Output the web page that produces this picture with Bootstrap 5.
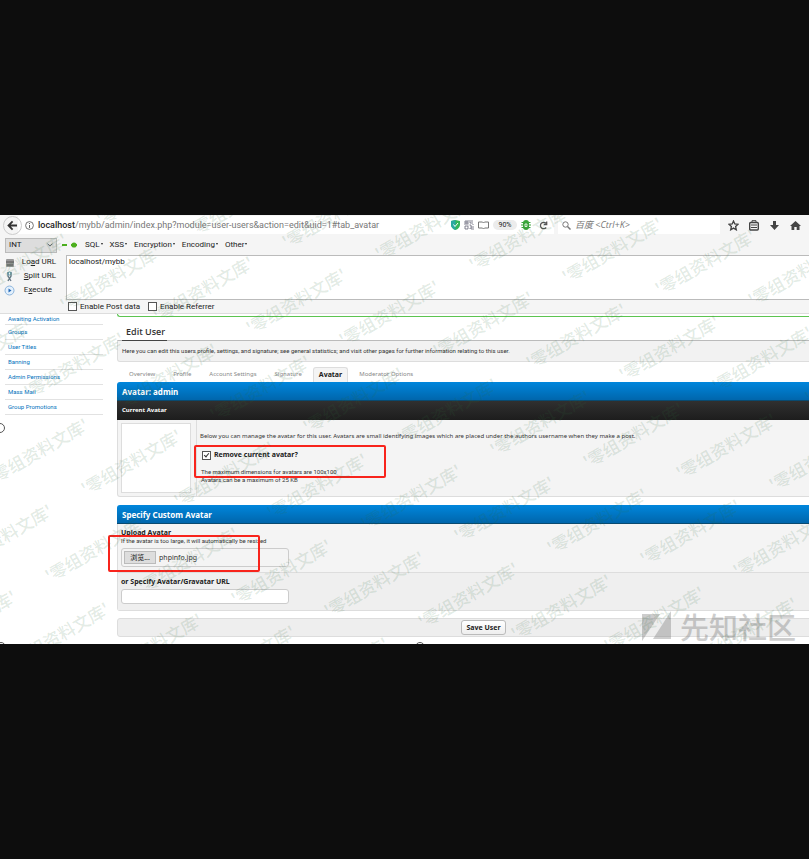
<!DOCTYPE html>
<html lang="en">
<head>
<meta charset="utf-8">
<meta name="viewport" content="width=device-width, initial-scale=1">
<title>Edit User</title>
<link href="https://cdn.jsdelivr.net/npm/bootstrap@5.3.0/dist/css/bootstrap.min.css" rel="stylesheet">
<style>
body{background:#0d0d0d;color:#333;font:6px/8px Roboto,"Noto Sans CJK SC",sans-serif}
.browser{background:#fff}
.chrome{background:#f5f5f5;font-size:8px;line-height:12px;color:#222}
.urlrow{height:20px;padding-left:3px}
.backbtn{width:19px;height:19px;border:1px solid #ccc!important;background:#fafafa;z-index:1}
.urlbox{background:#fff;height:18px;width:536px;margin-left:-4px;padding:0 6px 0 7px;color:#777}
.urltext{font-size:9px;line-height:14px;color:#777}
.urltext b{color:#222;font-weight:500}
.zoomlvl{background:#ececec;border-radius:6px;font-size:7px;line-height:10px;width:24px;color:#222}
.searchbox{background:#fff;height:18px;width:162px;margin-left:4px;padding:0 4px}
.searchbox input{font-size:9px;line-height:12px;font-style:italic;font-family:"Open Sans","Noto Sans CJK SC",sans-serif}
.searchbox input::placeholder{color:#777;opacity:1}
.tools{gap:10px;margin-left:8px}
.hackrow{height:20px;padding-left:5px}
.hackrow .form-select{width:52px;height:15px;font-size:8px;line-height:12px;padding:0 14px 0 3px;background-color:#ddd;border-color:#bbb;border-radius:0;background-size:6px;background-position:right 3px center;color:#222}
.menus{gap:7px;margin-left:8px}
.plain{background:none;border:0;padding:0;color:inherit;font:inherit}
.menus button::after{content:"";display:inline-block;border:solid transparent;border-width:2px 1px 0;border-top-color:#222;margin-left:1px;vertical-align:2px}
.cmds{width:66px;padding-left:4px;padding-right:10px}
.cmds button{height:14px}
.cmds svg{width:11px;height:11px}
.hackarea{height:45px;font-size:8px;line-height:12px;padding:0 2px;border:1px solid #bbb;border-right:0;border-radius:0;resize:none;color:#222}
.checks{height:14px;padding-left:68px;gap:8px;border-bottom:1px solid #ddd}
.checks label{gap:3px}
.tick{appearance:none;width:9px;height:9px;border:1px solid #555;background:#fff;margin:0;flex:none;position:relative}
.tick:checked::after{content:"";position:absolute;left:2px;top:0;width:3px;height:5px;border:solid #333;border-width:0 1px 1px 0;transform:rotate(40deg)}
.side{width:98px;margin-left:5px}
.side a{height:15px;padding:0 3px;color:#0072bc;border-bottom:1px solid #e2e2e2;line-height:8px}
.side a:first-child{height:11px}
.main{margin-left:14px;margin-right:-41px;min-width:0}
.notice{height:3px;border-bottom:1px solid #5cc450;border-left:1px solid #5cc450;border-radius:0 0 0 3px}
.pagetitle{font:600 9px/12px "Open Sans",sans-serif;padding:9px 4px 2px;border-bottom:1px solid #444;width:45px;margin:0 0 0 5px;white-space:nowrap;position:relative;z-index:1}
.intro{background:#f2f2f2;border:1px solid #ddd;border-top-color:#bbb;height:22px;padding:0 4px;margin-top:-1px;border-radius:0 0 0 3px}
.tabs{height:20px;padding-left:5px;gap:4px}
.tabs a{height:15px;padding:0 7px;line-height:15px;color:#888;font-family:"Noto Sans",sans-serif}
.tabs a.on{background:#f4f4f4;border:1px solid #ddd;border-bottom:0;border-radius:3px 3px 0 0;font:bold 7px/13px "Noto Sans",sans-serif;color:#222;padding:0 5px}
.bluebar{background:linear-gradient(#0086dc,#0066ac);border-bottom:1px solid #094a70;color:#fff;font:bold 8px/19px "Noto Sans",sans-serif;height:19px;padding:0 5px;margin:0;border-radius:3px 3px 0 0}
.blackbar{background:linear-gradient(#303030,#1d1d1d);color:#fff;font:bold 6px/19px "Noto Sans",sans-serif;height:19px;padding:0 5px}
.panel{background:#f4f4f4;border:1px solid #ddd;border-top:0;border-radius:0 0 0 3px}
.avatarcell{padding:3px 5px 3px 3px;border-right:1px solid #ddd}
.avatarpic{width:70px;height:70px;background:#fff;border:1px solid #ddd}
.about{padding:12px 3px 0}
.blurb{font:6px/8px "Noto Sans",sans-serif;white-space:nowrap}
.removal{margin:9px 0 7px 2px;height:12px;gap:3px;font:bold 7px/12px "Noto Sans",sans-serif;color:#222}
.limits{padding-left:1px}
.markbox{position:absolute;border:2px solid #f8241c;border-radius:2px;pointer-events:none}
.m1{left:77px;top:131px;width:192px;height:33px}
.m2{left:-9px;top:221px;width:152px;height:37px}
.lbl{font:bold 7px/9px "Noto Sans",sans-serif;color:#222}
.filebox{width:168px;height:19px;border:1px solid #ccc;border-radius:3px;margin-top:3px;padding-left:2px;gap:3px;font-size:7px;font-family:"Noto Sans","Noto Sans CJK SC",sans-serif}
.browse{background:#ddd;border:1px solid #bbb;width:32px;height:13px;line-height:11px;color:#111}
.urlfield{width:168px;height:15px;border:1px solid #ccc;border-radius:3px;background:#fff;font-size:7px;padding:0 3px;margin-top:3px}
.upload{padding:4px 3px 5px;border-bottom:1px solid #ddd}
.gravatar{background:#efefef;padding:4px 3px 6px}
.savebar{background:#eee;border:1px solid #ddd;border-radius:3px;height:19px;margin:7px 0}
.savebtn{width:45px;height:15px;padding:0;border:1px solid #bbb;border-radius:3px;background:linear-gradient(#fff,#eee);font:bold 7px/12px "Noto Sans",sans-serif;color:#222}
.stamps,.logo,.arcs{position:absolute;pointer-events:none}
.stamps,.arcs{inset:0;width:100%;height:100%}
.stamps{fill:#2e6b3c;fill-opacity:.15;font-weight:500}
.logo{right:13px;bottom:1px;height:34px;gap:8px;font-size:29px;line-height:34px;color:#777;opacity:.36;font-family:"Noto Sans CJK SC",sans-serif;font-weight:500}
</style>
<script src="https://cdn.jsdelivr.net/npm/bootstrap@5.3.0/dist/js/bootstrap.bundle.min.js"></script>
</head>
<body class="min-vh-100 d-flex flex-column justify-content-center overflow-hidden">
<div class="browser position-relative overflow-hidden">
<header class="chrome">
  <div class="urlrow d-flex align-items-center">
    <button class="backbtn rounded-circle plain d-flex align-items-center justify-content-center flex-shrink-0" aria-label="Back"><svg width="11" height="11" viewBox="0 0 11 11" fill="none" stroke="#333" stroke-width="1.8"><path d="M10 5.500H1.800M5.600 1.300 1.500 5.500l4.100 4.200"/></svg></button>
    <div class="urlbox d-flex align-items-center flex-shrink-0">
      <svg width="9" height="9" viewBox="0 0 9 9" class="me-1"><circle cx="4.500" cy="4.500" r="3.900" fill="none" stroke="#666" stroke-width=".9"/><path d="M4.500 4v3M4.500 2v1" stroke="#666"/></svg>
      <span class="urltext flex-grow-1"><b>localhost</b>/mybb/admin/index.php?module=user-users&amp;action=edit&amp;uid=1#tab_avatar</span>
      <span class="d-flex align-items-center gap-1">
      <svg width="9" height="10" viewBox="0 0 9 10"><path d="M0 1 4.500 0 9 1v4Q8.500 8.500 4.500 10 .5 8.500 0 5z" fill="#35b558"/><path d="M0 1 4.500 0v10Q.5 8.500 0 5z" fill="#2ba9a0"/><path d="m2.500 4.500 1.500 2L7 3" fill="none" stroke="#fff"/></svg>
      <svg width="10" height="10" viewBox="0 0 10 10" fill="none" stroke="#667" stroke-width=".8"><path d="M1 1h2v2H1zM4 0v4H0M6 0v3h3M7 1h2M1 6h3v3H1zM6 5h1v2h3M6 9V8h2v2M4.500 5h1M9 4v1M9 9h1"/></svg>
      <svg width="11" height="9" viewBox="0 0 11 9" fill="none" stroke="#777"><path d="M.5 1h4l1 1 1-1h4v6h-4l-1 1-1-1h-4z"/></svg>
      <span class="zoomlvl text-center">90%</span>
      <svg width="10" height="10" viewBox="0 0 10 10"><path d="M.5 2.500h9M0 5h10M.5 7.500h9" stroke="#3ba53b"/><rect x="2" y="0" width="6" height="10" rx="3" fill="#3ba53b"/><path d="M4 4h2v2.500H4z" fill="none" stroke="#fff" stroke-width=".8"/></svg>
      <svg width="9" height="9" viewBox="0 0 9 9" class="ms-1" fill="none" stroke="#555" stroke-width="1.300"><path d="M7.200 6.500A3.200 3.200 0 1 1 7 2.300M7.700.5v3H4.800"/></svg></span>
    </div>
    <div class="searchbox d-flex align-items-center gap-1 flex-shrink-0">
      <svg width="9" height="9" viewBox="0 0 9 9" fill="none" stroke="#777" class="flex-shrink-0"><circle cx="3.500" cy="3.500" r="2.700"/><path d="m5.500 5.500 3 3" stroke-width="1.500"/></svg>
      <input class="plain w-100" aria-label="Search" placeholder="百度 &lt;Ctrl+K&gt;">
    </div>
    <div class="tools d-flex align-items-center">
      <svg width="11" height="11" viewBox="0 0 11 11"><path d="m5.500 1 1.300 3 3.200.3-2.400 2.200.7 3.300-2.800-1.700-2.800 1.700.7-3.300L1 4.300 4.200 4z" fill="none" stroke="#444" stroke-width="1.300"/></svg>
      <svg width="10" height="11" viewBox="0 0 10 11"><path d="M3 2V.7h4V2" fill="none" stroke="#444"/><rect x=".7" y="2.500" width="8.600" height="7.500" rx="1" fill="none" stroke="#444" stroke-width="1.400"/><path d="M2 5h6M2 7.500h6" stroke="#444"/></svg>
      <svg width="11" height="11" viewBox="0 0 11 11"><path d="M4 1h3v4h3L5.500 10 1 5h3z" fill="#444"/></svg>
      <svg width="11" height="11" viewBox="0 0 11 11"><path d="M5.500 1 11 6H9.500v4H6.700V7H4.300v3H1.500V6H0z" fill="#444"/></svg>
    </div>
  </div>
  <div class="hackrow d-flex align-items-center">
    <select class="form-select" aria-label="Type"><option>INT</option></select>
    <svg width="16" height="8" viewBox="0 0 16 8" class="ms-1"><path d="M1 4h5M10 4h6" stroke="#4caf1e" stroke-width="2"/><circle cx="13" cy="4" r="2.600" fill="#4caf1e"/></svg>
    <nav class="menus d-flex"><button class="plain">SQL</button><button class="plain">XSS</button><button class="plain">Encryption</button><button class="plain">Encoding</button><button class="plain">Other</button></nav>
  </div>
  <div class="d-flex">
    <div class="cmds d-flex flex-column flex-shrink-0">
      <button class="plain d-flex align-items-center justify-content-between"><svg viewBox="0 0 11 11"><rect x="2" y="2" width="8" height="8" rx="1" fill="#999"/><path d="M2 5h8M3 8h6" stroke="#555"/></svg><span>Lo<u>a</u>d URL</span></button>
      <button class="plain d-flex align-items-center justify-content-between"><svg viewBox="0 0 11 11" fill="none" stroke="#678"><path d="M4 1v4l3 5M7 1v4l-3 5" stroke-width="1.300"/><circle cx="5.500" cy="2.500" r="1.500" stroke="#59a"/></svg><span><u>S</u>plit URL</span></button>
      <button class="plain d-flex align-items-center justify-content-between"><svg viewBox="0 0 11 11"><circle cx="5.500" cy="5.500" r="4.500" fill="#e3f0fc" stroke="#8cb4dc"/><path d="m4.500 3.500 3 2-3 2z" fill="#2469b8"/></svg><span class="pe-1">E<u>x</u>ecute</span></button>
    </div>
    <textarea class="hackarea form-control flex-grow-1" aria-label="URL">localhost/mybb</textarea>
  </div>
  <div class="checks d-flex align-items-center">
    <label class="d-flex align-items-center"><input type="checkbox" class="tick">Enable Post data</label>
    <label class="d-flex align-items-center"><input type="checkbox" class="tick">Enable Referrer</label>
  </div>
</header>
<div class="d-flex align-items-start">
  <nav class="side d-flex flex-column flex-shrink-0">
    <a href="#" class="text-decoration-none d-flex align-items-center">Awaiting Activation</a>
    <a href="#" class="text-decoration-none d-flex align-items-center">Groups</a>
    <a href="#" class="text-decoration-none d-flex align-items-center">User Titles</a>
    <a href="#" class="text-decoration-none d-flex align-items-center">Banning</a>
    <a href="#" class="text-decoration-none d-flex align-items-center">Admin Permissions</a>
    <a href="#" class="text-decoration-none d-flex align-items-center">Mass Mail</a>
    <a href="#" class="text-decoration-none d-flex align-items-center">Group Promotions</a>
  </nav>
  <main class="main flex-grow-1 position-relative">
    <div class="notice"></div>
    <h1 class="pagetitle">Edit User</h1>
    <div class="intro d-flex align-items-center">Here you can edit this users profile, settings, and signature; see general statistics; and visit other pages for further information relating to this user.</div>
    <nav class="tabs d-flex align-items-end">
      <a href="#" class="text-decoration-none">Overview</a><a href="#" class="text-decoration-none">Profile</a><a href="#" class="text-decoration-none">Account Settings</a><a href="#" class="text-decoration-none">Signature</a><a href="#" class="on text-decoration-none">Avatar</a><a href="#" class="text-decoration-none">Moderator Options</a>
    </nav>
    <h2 class="bluebar">Avatar: admin</h2>
    <div class="blackbar">Current Avatar</div>
    <div class="panel d-flex">
      <div class="avatarcell"><div class="avatarpic"></div></div>
      <div class="about">
        <div class="blurb">Below you can manage the avatar for this user. Avatars are small identifying images which are placed under the authors username when they make a post.</div>
        <label class="removal d-flex align-items-center"><input type="checkbox" class="tick" checked>Remove current avatar?</label>
        <div class="limits">The maximum dimensions for avatars are 100x100<br>Avatars can be a maximum of 25 KB</div>
      </div>
    </div>
    <h2 class="bluebar mt-2">Specify Custom Avatar</h2>
    <div class="panel">
      <div class="upload">
        <div class="lbl">Upload Avatar</div>
        <div>If the avatar is too large, it will automatically be resized</div>
        <label class="filebox d-flex align-items-center"><input type="file" class="visually-hidden"><span class="browse text-center">浏览...</span><span>phpinfo.jpg</span></label>
      </div>
      <div class="gravatar">
        <label class="lbl d-block" for="gurl">or Specify Avatar/Gravatar URL</label>
        <input id="gurl" type="text" class="urlfield d-block">
      </div>
    </div>
    <div class="savebar d-flex align-items-center justify-content-center"><button class="savebtn">Save User</button></div>
    <div class="markbox m1"></div>
    <div class="markbox m2"></div>
  </main>
</div>
<svg class="arcs" fill="#fff" stroke="#555" aria-hidden="true"><circle cx="0" cy="213" r="4.500"/><circle cx="1" cy="432" r="4.500"/><circle cx="420" cy="432" r="4.500"/></svg>
<div class="logo d-flex align-items-center" aria-hidden="true"><svg width="30" height="30" viewBox="0 0 30 30" fill="#777"><path d="M0 3h18L0 30z"/><path d="M29 0v28H11z"/></svg><span>先知社区</span></div>
<svg class="stamps" aria-hidden="true">
  <defs>
    <text id="stamp" transform="rotate(-30)" font-size="17" font-family="Noto Sans CJK SC">'零组资料文库'</text>
    <g id="stamprow"><use href="#stamp"/><use href="#stamp" x="93" y="12"/><use href="#stamp" x="186" y="23"/><use href="#stamp" x="279" y="35"/><use href="#stamp" x="372" y="47"/><use href="#stamp" x="466" y="58"/><use href="#stamp" x="559" y="70"/><use href="#stamp" x="652" y="82"/><use href="#stamp" x="745" y="93"/><use href="#stamp" x="838" y="105"/></g>
  </defs>
  <use href="#stamprow" x="8" y="-1"/>
  <use href="#stamprow" x="-28" y="85"/>
  <use href="#stamprow" x="-64" y="172"/>
  <use href="#stamprow" x="-100" y="258"/>
  <use href="#stamprow" x="-43" y="356"/>
  <use href="#stamprow" x="-79" y="442"/>
</svg>
</div>
</body>
</html>
